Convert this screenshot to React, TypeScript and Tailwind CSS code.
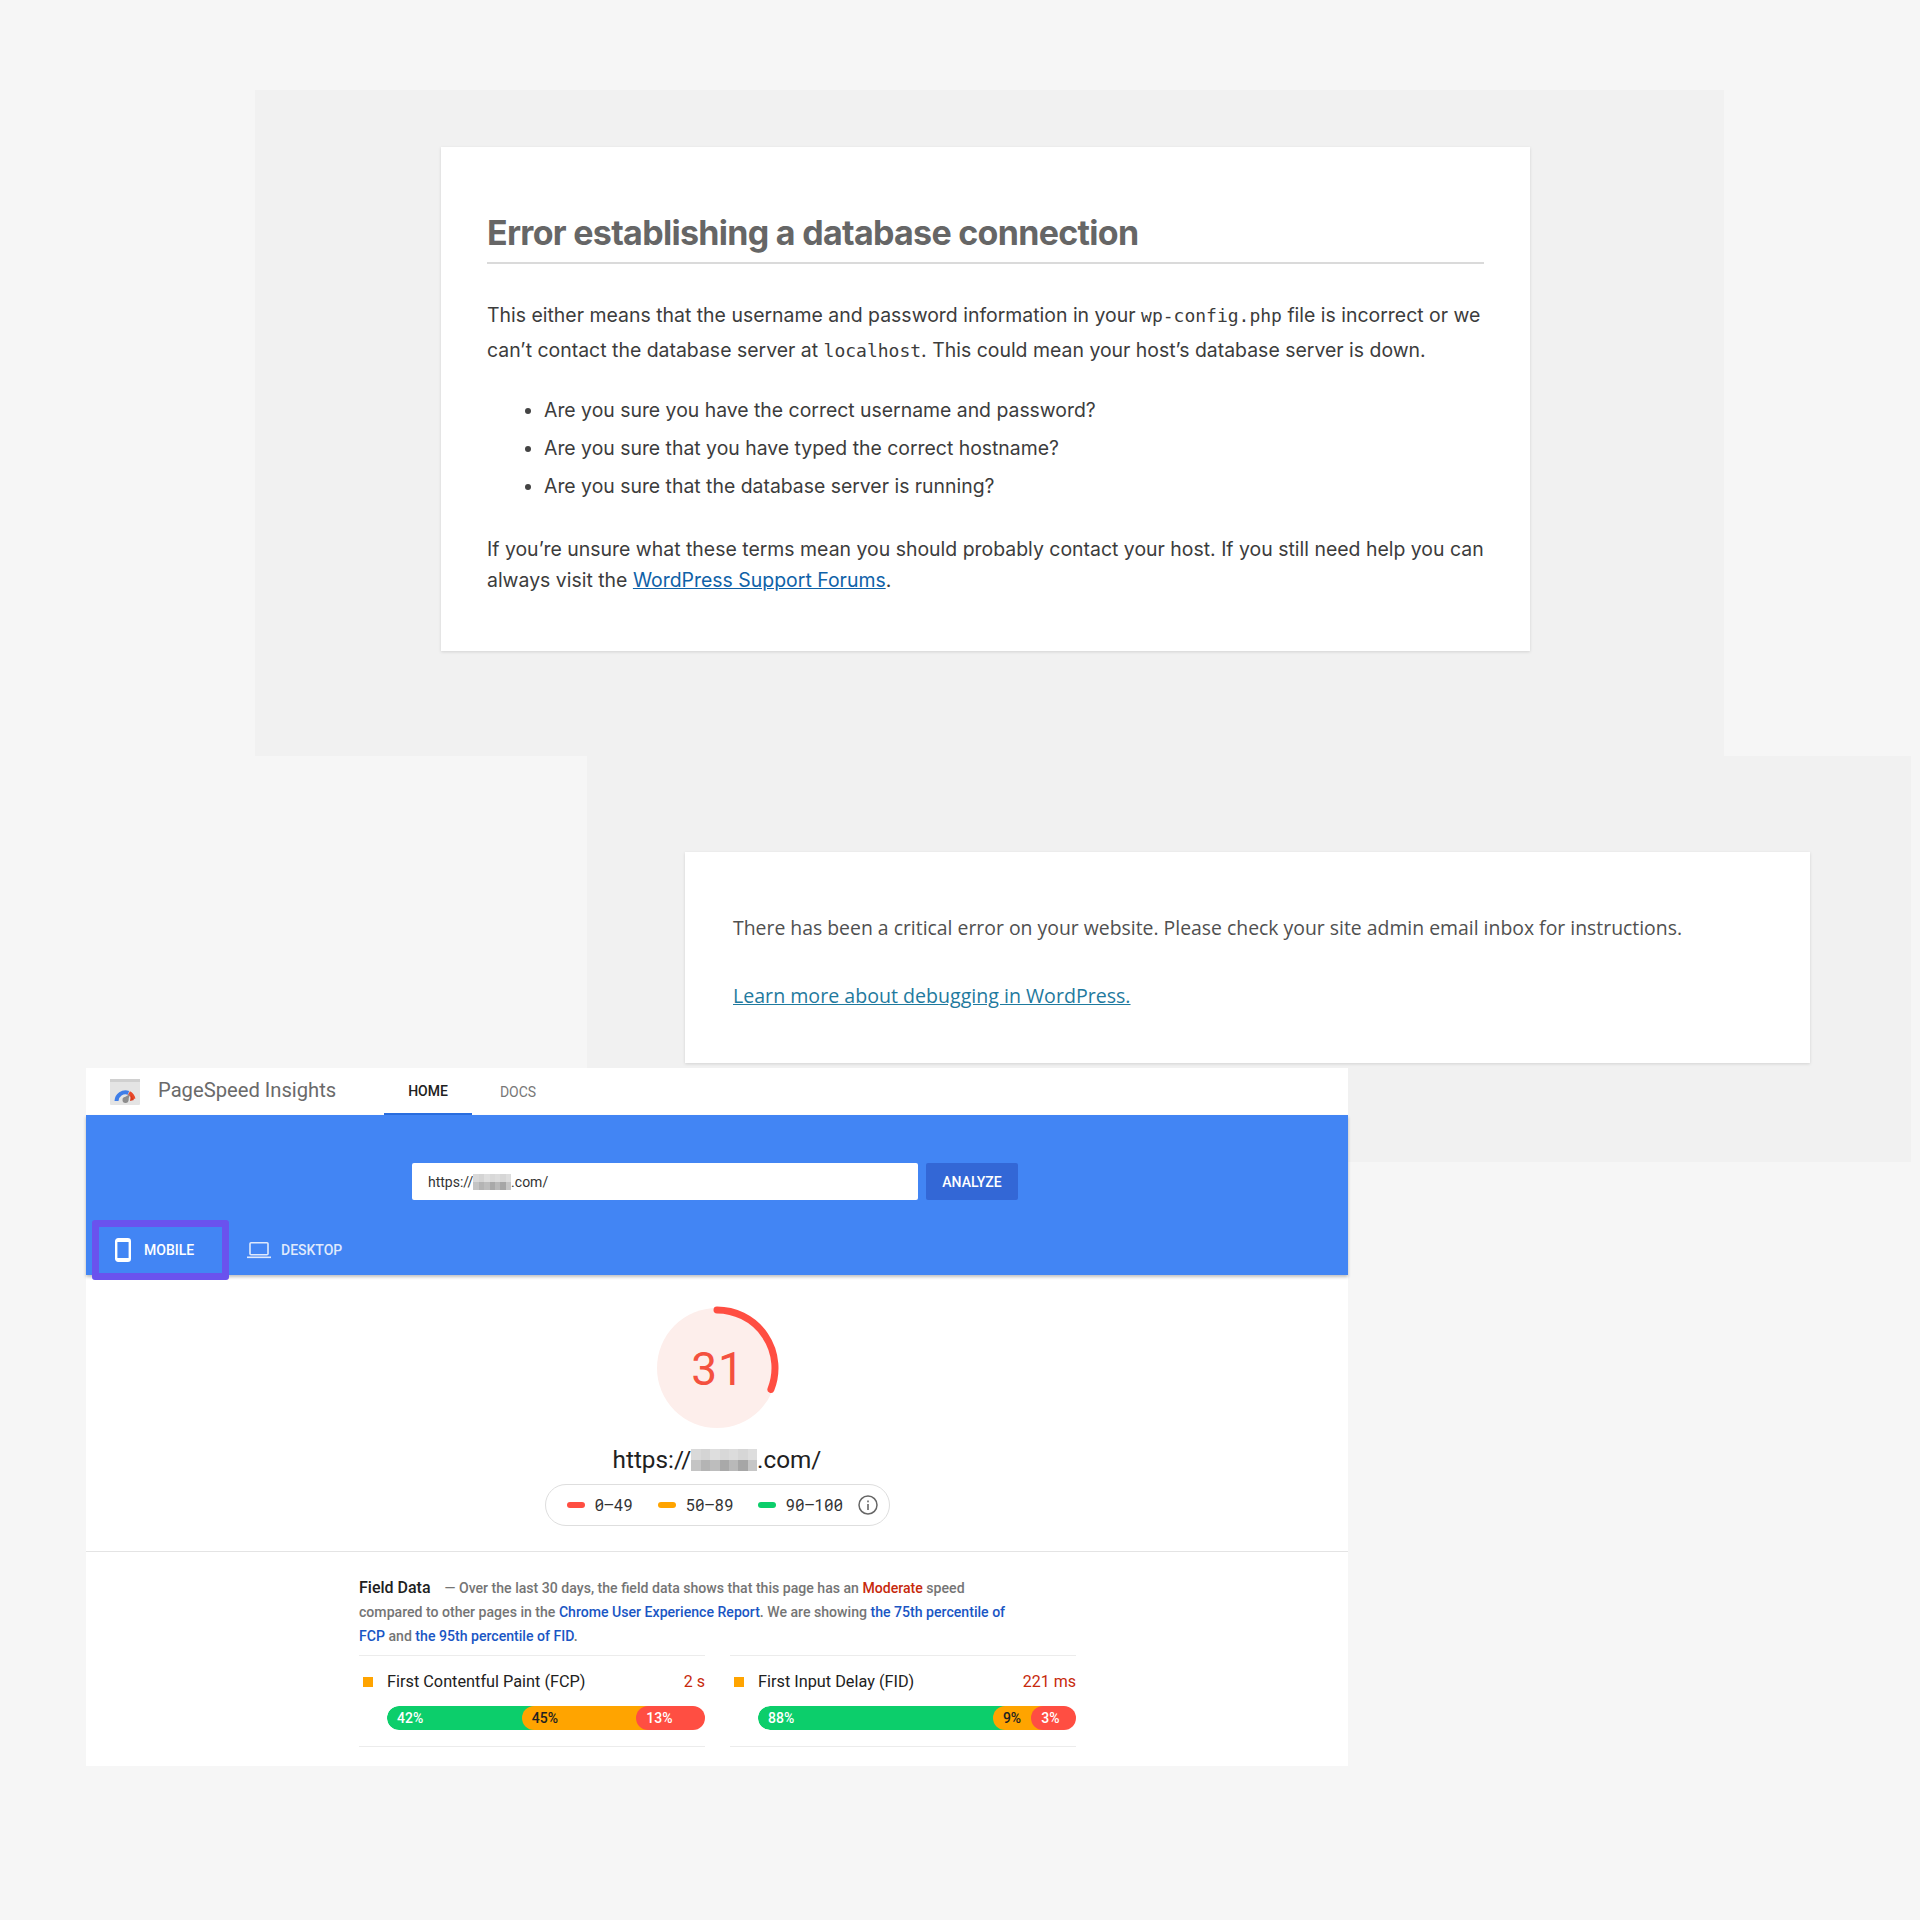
// App.tsx
const pixelRow1 = ["#d9d9d9", "#d4d4d4", "#dedede", "#d8d8d8", "#dcdcdc", "#d6d6d6", "#dddddd"];
const pixelRow2 = ["#c4c4c4", "#b4b4b4", "#bdbdbd", "#a9a9a9", "#b9b9b9", "#a6a6a6", "#c6c6c6"];

function BlurredName({ cell, rows }: { cell: string; rows: string }) {
  // the pixelated domain name
  return (
    <span className={`inline-grid grid-cols-7 align-middle ${rows}`}>
      {[...pixelRow1, ...pixelRow2].map((c, i) => (
        <span key={i} className={cell} style={{ backgroundColor: c }} />
      ))}
    </span>
  );
}

function GaugeLogo() {
  return (
    <svg width="30" height="26" viewBox="0 0 30 26">
      <rect width="30" height="26" rx="1" fill="#e4e4e4" />
      <rect width="30" height="3" fill="#d0d0d0" />
      <path d="M6.5 22 A 9 9 0 0 1 18.5 13.8" fill="none" stroke="#3f7ee8" strokeWidth="4" />
      <path d="M19 14 A 9 9 0 0 1 23.5 20" fill="none" stroke="#e8482a" strokeWidth="4" />
      <path d="M12.5 19.5 L 20 15 L 18 22 Z" fill="#8d8d8d" />
      <circle cx="15.5" cy="21" r="3" fill="#8d8d8d" />
      <path d="M21 16 L 24 21 L 20 22 Z" fill="#d9391c" />
    </svg>
  );
}

function Metric({ name, value, bars }: { name: string; value: string; bars: { w: number; label: string; cls: string }[] }) {
  return (
    <div className="w-[346px] border-y border-[#ececec] pt-[15px] pb-[16px]">
      <div className="flex items-center h-[22px]">
        <span className="w-[10px] h-[10px] bg-[#ffa400] ml-[4px] mr-[14px]" />
        <span className="flex-1 text-[16.3px] text-[#212121]">{name}</span>
        <span className="text-[16px] text-[#c7290c]">{value}</span>
      </div>
      <div className="flex ml-[28px] mt-[13px] h-[24px] rounded-full overflow-hidden text-[14px] font-medium leading-[24px]">
        {bars.map((b) => (
          <div key={b.label} className={`pl-[10px] rounded-l-[12px] -ml-[12px] first:ml-0 ${b.cls}`} style={{ width: b.w + 12 }}>
            {b.label}
          </div>
        ))}
      </div>
    </div>
  );
}

export default function App() {
  return (
    <div className="relative w-[1920px] h-[1920px] overflow-hidden bg-[#f6f6f6] font-['Roboto',sans-serif]">
      {/* first error page */}
      <div className="absolute left-[255px] top-[90px] w-[1469px] h-[666px] bg-[#f1f1f1] pl-[186px] pt-[57px]">
        <div className="w-[1089px] h-[504px] bg-white shadow-[0_1px_3px_rgba(0,0,0,0.13)] px-[46px] font-['Inter',sans-serif] text-[#444]">
          <h1 className="pt-[66px] h-[117px] border-b-2 border-[#dadada] text-[34px] leading-[40px] font-bold tracking-[-0.7px] text-[#666]">
            Error establishing a database connection
          </h1>
          <p className="mt-[34px] text-[19.45px] leading-[34px] text-[#3c3c3c] whitespace-nowrap">
            This either means that the username and password information in your <code className="font-['DejaVu_Sans_Mono',monospace] text-[18px]">wp-config.php</code> file is incorrect or we
            <br />
            can’t contact the database server at <code className="font-['DejaVu_Sans_Mono',monospace] text-[18px]">localhost</code>. This could mean your host’s database server is down.
          </p>
          <ul className="mt-[23px] ml-[57px] list-disc text-[19.4px] leading-[38px] text-[#3c3c3c] marker:text-[#444]">
            <li>Are you sure you have the correct username and password?</li>
            <li>Are you sure that you have typed the correct hostname?</li>
            <li>Are you sure that the database server is running?</li>
          </ul>
          <p className="mt-[29px] text-[19.45px] leading-[31px] text-[#3c3c3c] whitespace-nowrap">
            If you’re unsure what these terms mean you should probably contact your host. If you still need help you can
            <br />
            always visit the <a className="text-[#0f62a8] underline">WordPress Support Forums</a>.
          </p>
        </div>
      </div>

      {/* critical error page */}
      <div className="absolute left-[587px] top-[756px] w-[1324px] h-[406px] bg-[#f1f1f1] pl-[98px] pt-[96px]">
        <div className="w-[1125px] h-[211px] bg-white shadow-[0_1px_3px_rgba(0,0,0,0.13)] pl-[48px] pt-[62px] font-['Open_Sans',sans-serif] leading-[28px] text-[#505050]">
          <p className="text-[19.4px]">There has been a critical error on your website. Please check your site admin email inbox for instructions.</p>
          <a className="block mt-[40px] text-[19.6px] text-[#1f7a9e] underline">Learn more about debugging in WordPress.</a>
        </div>
      </div>

      {/* pagespeed insights */}
      <div className="absolute left-[86px] top-[1068px] w-[1262px] h-[698px] bg-white">
        <div className="flex items-center h-[47px] pl-[24px]">
          <GaugeLogo />
          <span className="ml-[18px] w-[226px] -mt-[2px] text-[20.2px] text-[#6a6a6a]">PageSpeed Insights</span>
          <div className="flex h-full">
            <div className="w-[88px] pt-[1px] flex items-center justify-center border-b-2 border-[#2a6ee0] text-[14px] font-medium text-[#212121]">HOME</div>
            <div className="w-[92px] pt-[1px] flex items-center justify-center text-[14px] text-[#777]">DOCS</div>
          </div>
        </div>

        <div className="h-[160px] bg-[#4285f4] shadow-[0_2px_3px_rgba(0,0,0,0.25)] relative">
          <div className="flex pt-[48px] pl-[326px] gap-[8px]">
            <div className="w-[506px] h-[37px] pt-[1px] bg-white rounded-[2px] flex items-center pl-[16px] text-[14px] text-[#333]">
              https://
              <BlurredName cell="w-[5.4px] h-[8px]" rows="grid-rows-2" />
              .com/
            </div>
            <div className="w-[92px] h-[37px] pt-[1px] bg-[#3367d6] rounded-[2px] flex items-center justify-center text-[14px] font-medium text-white">ANALYZE</div>
          </div>
          <div className="flex items-center mt-[25px] h-[50px] text-[14px] font-medium">
            <div className="flex items-center w-[161px] pl-[29px] text-white">
              <svg width="16" height="24" viewBox="0 0 16 24" className="mr-[13px]">
                <rect x="1.2" y="1.2" width="13.6" height="21.6" rx="2" fill="none" stroke="#fff" strokeWidth="2.4" />
                <rect x="1" y="1" width="14" height="3" rx="1" fill="#fff" />
                <rect x="1" y="20" width="14" height="3" rx="1" fill="#fff" />
              </svg>
              MOBILE
            </div>
            <div className="flex items-center text-[#dfe9fc]">
              <svg width="24" height="18" viewBox="0 0 24 18" className="mr-[10px]">
                <rect x="3" y="1.7" width="18" height="12" rx="1" fill="none" stroke="#dfe9fc" strokeWidth="1.6" />
                <rect x="0" y="15.5" width="24" height="1.6" fill="#dfe9fc" />
              </svg>
              DESKTOP
            </div>
          </div>
          {/* highlight round the active tab */}
          <div className="absolute left-[6px] top-[105px] w-[137px] h-[60px] border-[7px] border-[#6a52ee] rounded-[3px]" />
        </div>

        <div className="flex flex-col items-center h-[277px] border-b border-[#e4e4e4]">
          <svg width="124" height="124" viewBox="0 0 124 124" className="mt-[31px] mr-[1px]">
            <circle cx="62" cy="62" r="60" fill="#fdeeeb" />
            <path d="M 62 4 A 58 58 0 0 1 115.9 83.4" fill="none" stroke="#ff4e42" strokeWidth="7" strokeLinecap="round" />
            <text x="63" y="79" textAnchor="middle" fontFamily="Roboto" fontSize="46" letterSpacing="1" fill="#f4513f">31</text>
          </svg>
          <div className="mt-[12px] h-[36px] flex items-center text-[24.3px] text-[#212121]">
            https://
            <BlurredName cell="w-[9.4px] h-[11px]" rows="grid-rows-2" />
            .com/
          </div>
          <div className="mt-[6px] w-[345px] h-[42px] rounded-full border border-[#dedede] flex items-center pl-[21px] font-['Roboto_Mono','DejaVu_Sans_Mono',monospace] text-[16px] text-[#333]">
            <span className="w-[18px] h-[6px] rounded-full bg-[#ff4e42] mr-[10px]" />
            <span className="w-[63px]">0–49</span>
            <span className="w-[18px] h-[6px] rounded-full bg-[#ffa400] mr-[10px]" />
            <span className="w-[72px]">50–89</span>
            <span className="w-[18px] h-[6px] rounded-full bg-[#0cce6b] mr-[10px]" />
            <span className="w-[72px]">90–100</span>
            <svg width="20" height="20" viewBox="0 0 20 20">
              <circle cx="10" cy="10" r="9" fill="none" stroke="#666" strokeWidth="1.5" />
              <rect x="9.2" y="9" width="1.6" height="6" fill="#666" />
              <rect x="9.2" y="5.5" width="1.6" height="1.8" fill="#666" />
            </svg>
          </div>
        </div>

        <div className="pl-[273px] pt-[24px]">
          <p className="w-[720px] text-[14.1px] leading-[24px] font-medium text-[#757575] whitespace-nowrap">
            <span className="text-[16px] text-[#212121] mr-[14px]">Field Data</span>— Over the last 30 days, the field data shows that this page has an <span className="text-[#c7290c]">Moderate</span> speed
            <br />
            compared to other pages in the <span className="text-[#1a56c4]">Chrome User Experience Report</span>. We are showing <span className="text-[#1a56c4]">the 75th percentile of</span>
            <br />
            <span className="text-[#1a56c4]">FCP</span> and <span className="text-[#1a56c4]">the 95th percentile of FID</span>.
          </p>
          <div className="flex gap-[25px] mt-[7px]">
            <Metric
              name="First Contentful Paint (FCP)"
              value="2 s"
              bars={[
                { w: 140, label: "42%", cls: "bg-[#0cce6b] text-white" },
                { w: 119, label: "45%", cls: "bg-[#ffa400] text-[#212121]" },
                { w: 59, label: "13%", cls: "bg-[#ff4e42] text-white" },
              ]}
            />
            <Metric
              name="First Input Delay (FID)"
              value="221 ms"
              bars={[
                { w: 244, label: "88%", cls: "bg-[#0cce6b] text-white" },
                { w: 40, label: "9%", cls: "bg-[#ffa400] text-[#212121]" },
                { w: 34, label: "3%", cls: "bg-[#ff4e42] text-white" },
              ]}
            />
          </div>
        </div>
      </div>
    </div>
  );
}
